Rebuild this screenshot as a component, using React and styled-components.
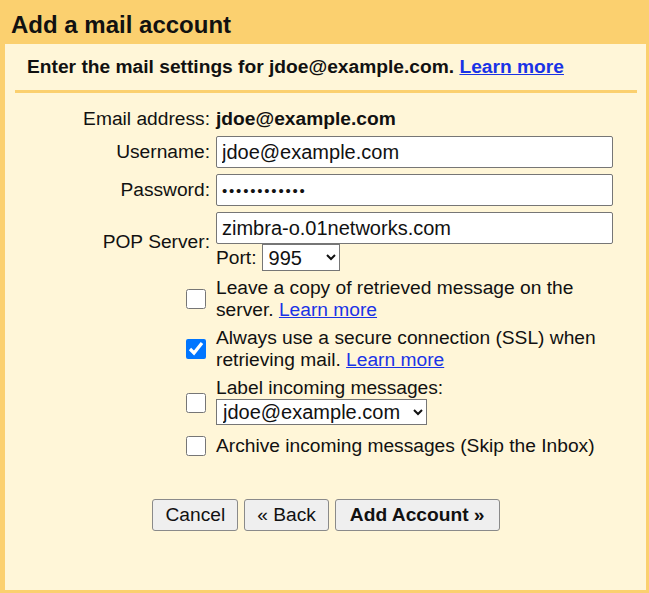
import styled, { createGlobalStyle } from 'styled-components';

const GlobalStyle = createGlobalStyle`
  html, body {
    margin: 0;
    padding: 0;
    background: #fbd06f;
  }
  body {
    font-family: "Liberation Sans", Arial, sans-serif;
    font-size: 19.2px;
    color: #111;
  }
`;

const Dialog = styled.div`
  width: 649px;
  height: 593px;
  display: flex;
  flex-direction: column;
  background: #fbd06f;
  box-sizing: border-box;
  padding: 0 3px 3px 5px;
`;

const Title = styled.h1`
  margin: 0;
  height: 44px;
  padding-left: 6px;
  font-size: 24px;
  font-weight: bold;
  line-height: 49px;
  color: #111;
`;

const Panel = styled.div`
  flex: 1;
  background: #fff6d8;
  display: flex;
  flex-direction: column;
  padding: 0 9px 0 10px;
`;

const Intro = styled.div`
  padding: 12px 12px 12px;
  font-weight: bold;
  line-height: 22px;
  border-bottom: 3px solid #fbd06f;
`;

const Link = styled.a`
  color: #1a33e6;
  text-decoration: underline;
  cursor: pointer;
`;

const Form = styled.div`
  display: grid;
  grid-template-columns: 195px 397px;
  column-gap: 6px;
  row-gap: 6px;
  margin-top: 15px;
  line-height: 22px;
`;

const Label = styled.div`
  justify-self: end;
  align-self: center;
  text-align: right;
`;

const Value = styled.div`
  font-weight: bold;
`;

const TextInput = styled.input`
  box-sizing: border-box;
  width: 397px;
  height: 32px;
  border: 1px solid #767676;
  border-radius: 2px;
  background: #fff;
  padding: 0 5px;
  font-family: "Liberation Sans", Arial, sans-serif;
  font-size: 20px;
  color: #111;
  outline: none;

  &[type='password'] {
    font-size: 15px;
    letter-spacing: 1.8px;
  }
`;

const Stack = styled.div`
  display: flex;
  flex-direction: column;
`;

const PortRow = styled.div`
  display: flex;
  align-items: center;
  gap: 5px;
  height: 27px;
`;

const Select = styled.select`
  height: ${(p) => p.$h || 27}px;
  width: ${(p) => p.$w}px;
  border: 1px solid #767676;
  border-radius: 0;
  background: #fff;
  font-family: "Liberation Sans", Arial, sans-serif;
  font-size: 20px;
  color: #111;
  padding: 0 2px;
`;

const Check = styled.input`
  justify-self: end;
  align-self: center;
  width: 20px;
  height: 20px;
  margin: 0 4px 0 0;
`;

const CheckText = styled.div`
  align-self: center;
`;

const Spacer = styled.div`
  height: ${(p) => p.$h}px;
`;

const Buttons = styled.div`
  display: flex;
  justify-content: center;
  gap: 6px;
  margin-top: 42px;
`;

const Button = styled.button`
  height: 32px;
  padding: 0 ${(p) => (p.$primary ? 14 : 12)}px;
  background: #efefef;
  border: 1px solid #8a8a8a;
  border-radius: 3px;
  font-family: "Liberation Sans", Arial, sans-serif;
  font-size: 19.2px;
  font-weight: ${(p) => (p.$primary ? 'bold' : 'normal')};
  color: #111;
  cursor: pointer;
`;

export default function App() {
  return (
    <>
      <GlobalStyle />
      <Dialog>
        <Title>Add a mail account</Title>
        <Panel>
          <Intro>
            Enter the mail settings for jdoe@example.com. <Link>Learn more</Link>
          </Intro>
          <Form>
            <Label>Email address:</Label>
            <Value>jdoe@example.com</Value>

            <Label>Username:</Label>
            <TextInput defaultValue="jdoe@example.com" />

            <Label>Password:</Label>
            <TextInput type="password" defaultValue="secretpass12" />

            <Label>POP Server:</Label>
            <Stack>
              <TextInput defaultValue="zimbra-o.01networks.com" />
              <PortRow>
                Port:
                <Select $w={78} defaultValue="995">
                  <option>995</option>
                  <option>110</option>
                </Select>
              </PortRow>
            </Stack>

            <Check type="checkbox" />
            <CheckText>
              Leave a copy of retrieved message on the server. <Link>Learn more</Link>
            </CheckText>

            <Check type="checkbox" defaultChecked />
            <CheckText>
              Always use a secure connection (SSL) when retrieving mail. <Link>Learn more</Link>
            </CheckText>

            <Check type="checkbox" />
            <Stack>
              Label incoming messages:
              <Select $w={211} $h={26} defaultValue="jdoe@example.com">
                <option>jdoe@example.com</option>
              </Select>
              <Spacer $h={4} />
            </Stack>

            <Check type="checkbox" />
            <CheckText>Archive incoming messages (Skip the Inbox)</CheckText>
          </Form>
          <Buttons>
            <Button>Cancel</Button>
            <Button>« Back</Button>
            <Button $primary>Add Account »</Button>
          </Buttons>
        </Panel>
      </Dialog>
    </>
  );
}
